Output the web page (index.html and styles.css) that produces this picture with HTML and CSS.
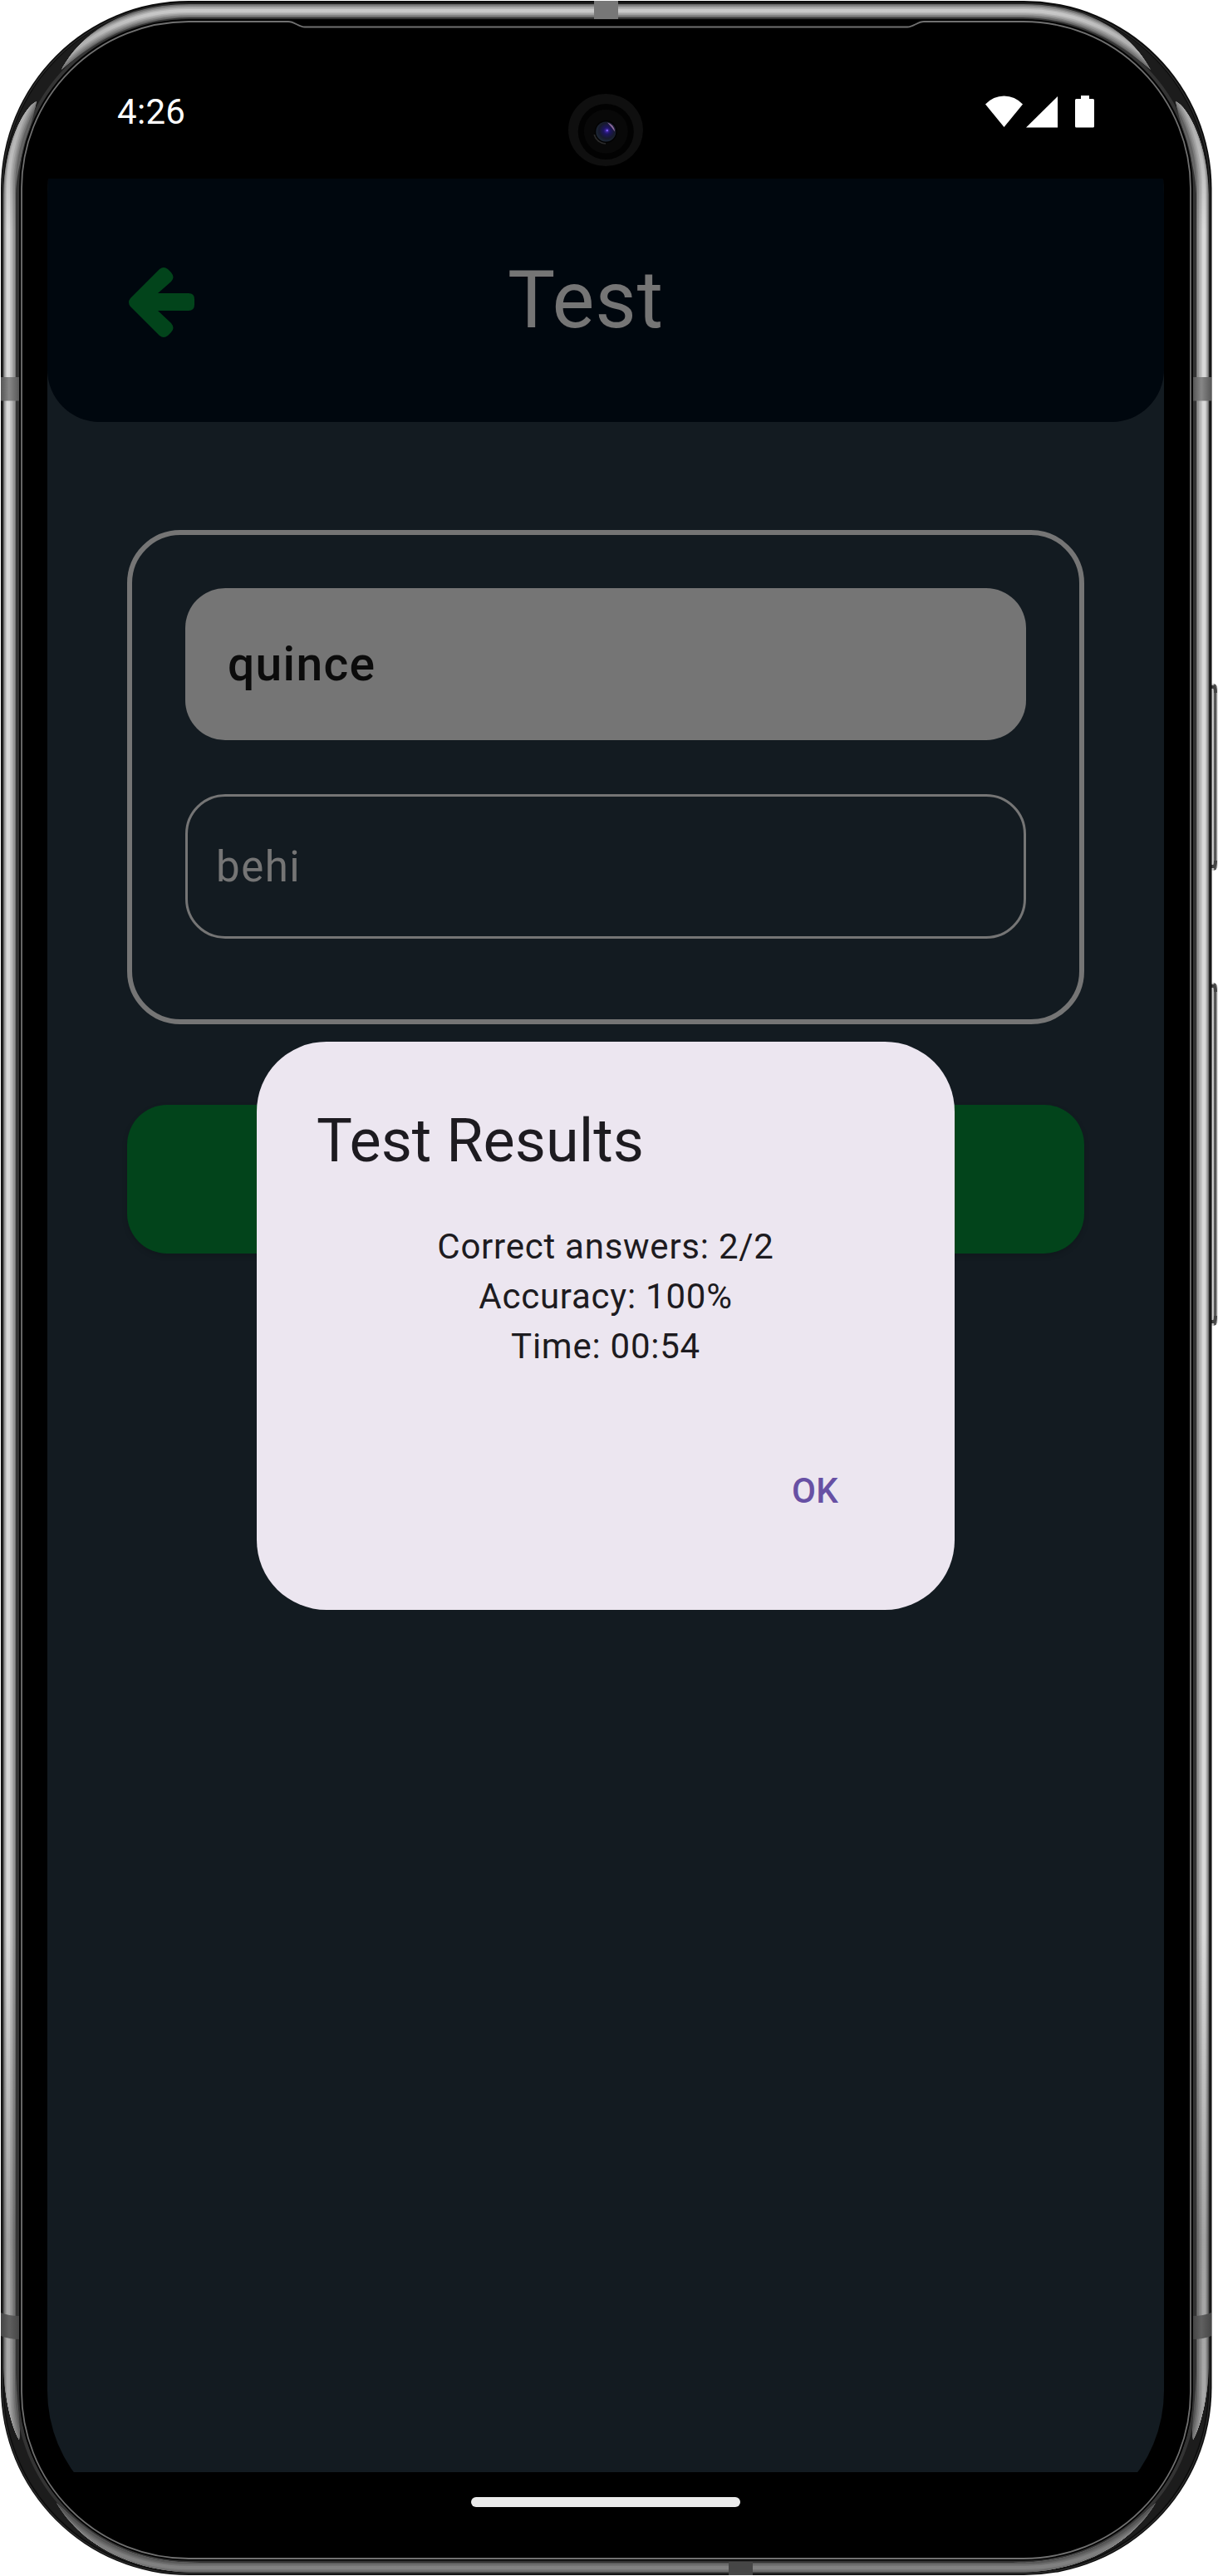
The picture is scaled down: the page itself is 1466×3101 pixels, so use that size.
FILE: index.html
```html
<!DOCTYPE html>
<html lang="en">
<head>
<meta charset="utf-8">
<title>Test</title>
<link rel="stylesheet" href="styles.css">
</head>
<body>
<div class="phone">
  <svg class="frame" width="1466" height="3101" viewBox="0 0 1466 3101" aria-hidden="true">
    <defs>
      <linearGradient id="fade" x1="0" y1="0" x2="0" y2="3101" gradientUnits="userSpaceOnUse">
        <stop offset="0" stop-color="#000" stop-opacity=".04"/>
        <stop offset=".025" stop-color="#000" stop-opacity=".25"/>
        <stop offset=".045" stop-color="#000" stop-opacity=".2"/>
        <stop offset=".09" stop-color="#000" stop-opacity="0"/>
        <stop offset=".75" stop-color="#000" stop-opacity="0"/>
        <stop offset=".87" stop-color="#000" stop-opacity=".25"/>
        <stop offset=".93" stop-color="#000" stop-opacity=".22"/>
        <stop offset=".965" stop-color="#000" stop-opacity=".45"/>
        <stop offset="1" stop-color="#000" stop-opacity=".4"/>
      </linearGradient>
      <linearGradient id="key" x1="0" x2="1" y1="0" y2="0">
        <stop offset="0" stop-color="#d8d8d8"/>
        <stop offset=".5" stop-color="#cfcfcf"/>
        <stop offset=".68" stop-color="#333"/>
        <stop offset=".85" stop-color="#777"/>
        <stop offset="1" stop-color="#ccc"/>
      </linearGradient>
      <linearGradient id="band" x1="0" x2="1" y1="0" y2="0">
        <stop offset="0" stop-color="#555"/>
        <stop offset=".45" stop-color="#878787"/>
        <stop offset="1" stop-color="#585858"/>
      </linearGradient>
      <linearGradient id="bandLow" x1="0" x2="1" y1="0" y2="0">
        <stop offset="0" stop-color="#444"/>
        <stop offset=".45" stop-color="#606060"/>
        <stop offset="1" stop-color="#464646"/>
      </linearGradient>
      <radialGradient id="lens" cx=".55" cy=".45" r=".6">
        <stop offset="0" stop-color="#4a2cb8"/>
        <stop offset=".28" stop-color="#1d1560"/>
        <stop offset=".65" stop-color="#171a2c"/>
        <stop offset="1" stop-color="#1f2c38"/>
      </radialGradient>
      <clipPath id="shine">
        <path d="M74 84C92 51 135 5 228 5H1231C1324 5 1367 51 1385 84C1347 51 1300 22 1231 21H228C159 22 112 51 74 84Z"/>
        <path d="M44 122C29 129 5 174 4 234V2850C5 2878 12 2918 23 2937C26 2918 19 2890 19 2850V234C20 195 38 154 44 122Z"/>
        <path d="M1415 122C1430 129 1454 174 1455 234V2850C1454 2878 1447 2918 1436 2937C1433 2918 1440 2890 1440 2850V234C1439 195 1421 154 1415 122Z"/>
        <path d="M68 3013C90 3050 142 3097 240 3097H1219C1317 3097 1369 3050 1391 3013C1350 3050 1310 3085 1219 3085H240C149 3085 109 3050 68 3013Z"/>
      </clipPath>
    </defs>
    <g>
      <rect x="1455" y="823" width="10.5" height="225" rx="6" fill="url(#key)"/>
      <path d="M1458 827h3q2 1 2 7M1458 1043h3q2-1 2-7" fill="none" stroke="#444" stroke-width="4"/>
      <rect x="1455" y="1183" width="10.5" height="413" rx="6" fill="url(#key)"/>
      <path d="M1458 1187h3q2 1 2 7M1458 1591h3q2-1 2-7" fill="none" stroke="#444" stroke-width="4"/>
    </g>
    <rect x="1" y="1" width="1457.5" height="3099" rx="226" fill="#0c0c0c"/>
    <g fill="none">
      <rect x="3" y="4" width="1453" height="3094" rx="223" stroke="#2a2a2a" stroke-width="1.5"/>
      <rect x="13" y="13" width="1433" height="3075" rx="214" stroke="#1c1c1c" stroke-width="16"/>
      <rect x="21" y="21" width="1417" height="3063" rx="206" stroke="#343434" stroke-width="4"/>
    </g>
    <g fill="none" clip-path="url(#shine)">
      <rect x="12" y="13" width="1435" height="3076" rx="215" stroke="#747474" stroke-width="20"/>
      <rect x="11.5" y="13" width="1436" height="3077" rx="215" stroke="#939393" stroke-width="13"/>
      <rect x="11" y="13" width="1437" height="3078" rx="215" stroke="#adadad" stroke-width="10"/>
      <rect x="10.5" y="13" width="1438" height="3078" rx="215" stroke="#c3c3c3" stroke-width="7"/>
      <rect x="10" y="13" width="1439" height="3078" rx="215" stroke="#d8d8d8" stroke-width="4"/>
      <rect x="0" y="0" width="1466" height="3101" fill="url(#fade)"/>
    </g>
    <rect x="1" y="454" width="22" height="28.5" fill="url(#band)"/>
    <rect x="1436" y="454" width="22" height="28.5" fill="url(#band)"/>
    <rect x="715" y="1" width="29" height="22" fill="#777"/>
    <path d="M1 2784q10 4 22 4v28q-12 0-22-4z" fill="url(#bandLow)"/>
    <path d="M1458 2784q-10 4-22 4v28q12 0 22-4z" fill="url(#bandLow)"/>
    <rect x="23.500" y="23.500" width="1412" height="3059" rx="203.500" fill="#000"/>
    <rect x="877" y="3084" width="29" height="16" fill="#464646"/>
    <path d="M26 227A201 201 0 0 1 227 26H347C355 26 359 32.500 367 32.500H1092C1100 32.500 1104 26 1112 26H1232A201 201 0 0 1 1433 227V2879A201 201 0 0 1 1232 3080H227A201 201 0 0 1 26 2879Z" fill="#000" stroke="#707070" stroke-width="1.800"/>
  </svg>

  <div class="screen">
    <div class="status-bar">
      <span class="clock">4:26</span>
      <svg class="status-icons" width="132" height="40" viewBox="0 0 132 40" fill="#fff" aria-label="Wi-Fi, signal, battery">
        <path d="M0 10.500Q9.500 .5 22.500 .5T45 10.500L22.500 38Z"/>
        <path d="M87 1V38.500H49Z"/>
        <path d="M115 0H125V4H129.500Q131 4 131 5.500V37Q131 38.500 129.500 38.500H109.500Q108 38.500 108 37V5.500Q108 4 109.500 4H115Z"/>
      </svg>
    </div>

    <main class="app">
      <header class="app-header">
        <svg class="back" width="80" height="86" viewBox="0 0 80 86" aria-label="Back">
          <path d="M37 3Q42-1 47 3L51 7Q56 13 51 18L35 32H72Q79 32 79 39V46Q79 53 72 53H35L51 68Q56 74 51 79L47 83Q42 87 37 83L2 48Q-2 43 2 38Z"/>
        </svg>
        <h1 class="title">Test</h1>
      </header>

      <section class="card">
        <div class="word">quince</div>
        <div class="answer">behi</div>
      </section>
      <button class="submit" type="button" aria-label="Submit"></button>

      <div class="dialog" role="dialog">
        <h2 class="dialog-title">Test Results</h2>
        <p class="dialog-body">Correct answers: 2/2<br>Accuracy: 100%<br>Time: 00:54</p>
        <div class="dialog-actions"><button class="ok" type="button">OK</button></div>
      </div>
    </main>

    <footer class="nav-bar"></footer>
  </div>

  <svg class="camera" width="92" height="90" viewBox="0 0 92 90" aria-hidden="true">
    <ellipse cx="46" cy="44.500" rx="45" ry="43.500" fill="#0f0f0f"/>
    <circle cx="46.300" cy="46.500" r="33.500" fill="#020202"/>
    <circle cx="46.300" cy="46.200" r="26.500" fill="#080808"/>
    <path d="M32.500 50a14.500 14.500 0 0 0 13.500 10.500" fill="none" stroke="#2a2a2a" stroke-width="2.500"/>
    <circle cx="46.300" cy="46.500" r="13.500" fill="#020203"/>
    <circle cx="46.300" cy="46.500" r="12" fill="url(#lens)"/>
    <path d="M48 35.500a11.500 11.500 0 0 1 9 11q-4-6-9-11z" fill="#8d6a9d"/>
    <circle cx="47.800" cy="45" r="1.300" fill="#7a5cf0"/>
  </svg>
  <div class="home-pill"></div>
</div>
</body>
</html>
```

FILE: styles.css
```css
* {
  box-sizing: border-box;
}

body {
  margin: 0;
  background: #fff;
  font-family: Roboto, "Liberation Sans", sans-serif;
}

.phone {
  position: relative;
  width: 1466px;
  height: 3101px;
  padding: 54px 65px 55px 57px;
  overflow: hidden;
}

.frame {
  position: absolute;
  inset: 0;
}

.screen {
  position: relative;
  display: flex;
  flex-direction: column;
  width: 1344px;
  height: 2992px;
  border-radius: 180px 180px 168px 168px;
  overflow: hidden;
  background: #000;
}

.status-bar {
  display: flex;
  justify-content: space-between;
  align-items: flex-start;
  height: 161px;
  padding: 56px 83px 0 84px;
  color: #fff;
}

.clock {
  font-size: 42px;
  line-height: 50px;
  letter-spacing: .3px;
}

.status-icons {
  margin-top: 5px;
}

.app {
  flex: 1;
  display: flex;
  flex-direction: column;
  background: #131b21;
}

.app-header {
  display: flex;
  align-items: flex-start;
  height: 293px;
  padding: 106px 98px 0;
  border-radius: 0 0 63px 63px;
  background: #00070e;
}

.back {
  fill: #02441b;
}

.title {
  margin: -16px 0 0 376px;
  font-size: 96px;
  font-weight: 400;
  line-height: 112px;
  letter-spacing: .9px;
  color: #757575;
}

.card {
  display: flex;
  flex-direction: column;
  gap: 65px;
  height: 595px;
  margin: 130px 96px 0;
  padding: 64px;
  border: 6px solid #757575;
  border-radius: 64px;
}

.word,
.answer {
  display: flex;
  align-items: center;
  border-radius: 48px;
}

.word {
  height: 183px;
  padding-left: 51px;
  background: #757575;
  color: #0b0b0b;
  font-size: 57px;
  font-weight: 500;
  letter-spacing: 1.3px;
}

.answer {
  height: 174px;
  padding-left: 34px;
  border: 3px solid #757575;
  color: #757575;
  font-size: 51px;
  letter-spacing: 1.5px;
}

.submit {
  height: 179px;
  margin: 97px 96px 0;
  border: 0;
  border-radius: 48px;
  background: #02441b;
  box-shadow: 0 3px 6px rgba(0, 0, 0, .15);
}

.dialog {
  position: absolute;
  top: 1200px;
  left: 252px;
  display: flex;
  flex-direction: column;
  width: 840px;
  height: 684px;
  padding: 72px;
  border-radius: 84px;
  background: #ece6f0;
  color: #1d1b20;
}

.dialog-title {
  margin: 0;
  font-size: 72px;
  font-weight: 400;
  line-height: 96px;
}

.dialog-body {
  flex: 1;
  margin: 49px 0 0;
  font-size: 42px;
  line-height: 60px;
  letter-spacing: .75px;
  text-align: center;
}

.dialog-actions {
  display: flex;
  justify-content: flex-end;
  padding: 0 68px 41px 0;
}

.ok {
  padding: 0;
  border: 0;
  background: none;
  color: #6750a4;
  font: 500 42px/60px Roboto, sans-serif;
  letter-spacing: .3px;
}

.nav-bar {
  height: 70px;
  background: #000;
}

.camera {
  position: absolute;
  top: 112px;
  left: 683px;
}

.home-pill {
  position: absolute;
  top: 3006px;
  left: 567px;
  width: 324px;
  height: 12px;
  border-radius: 6px;
  background: #ebebeb;
}
```
